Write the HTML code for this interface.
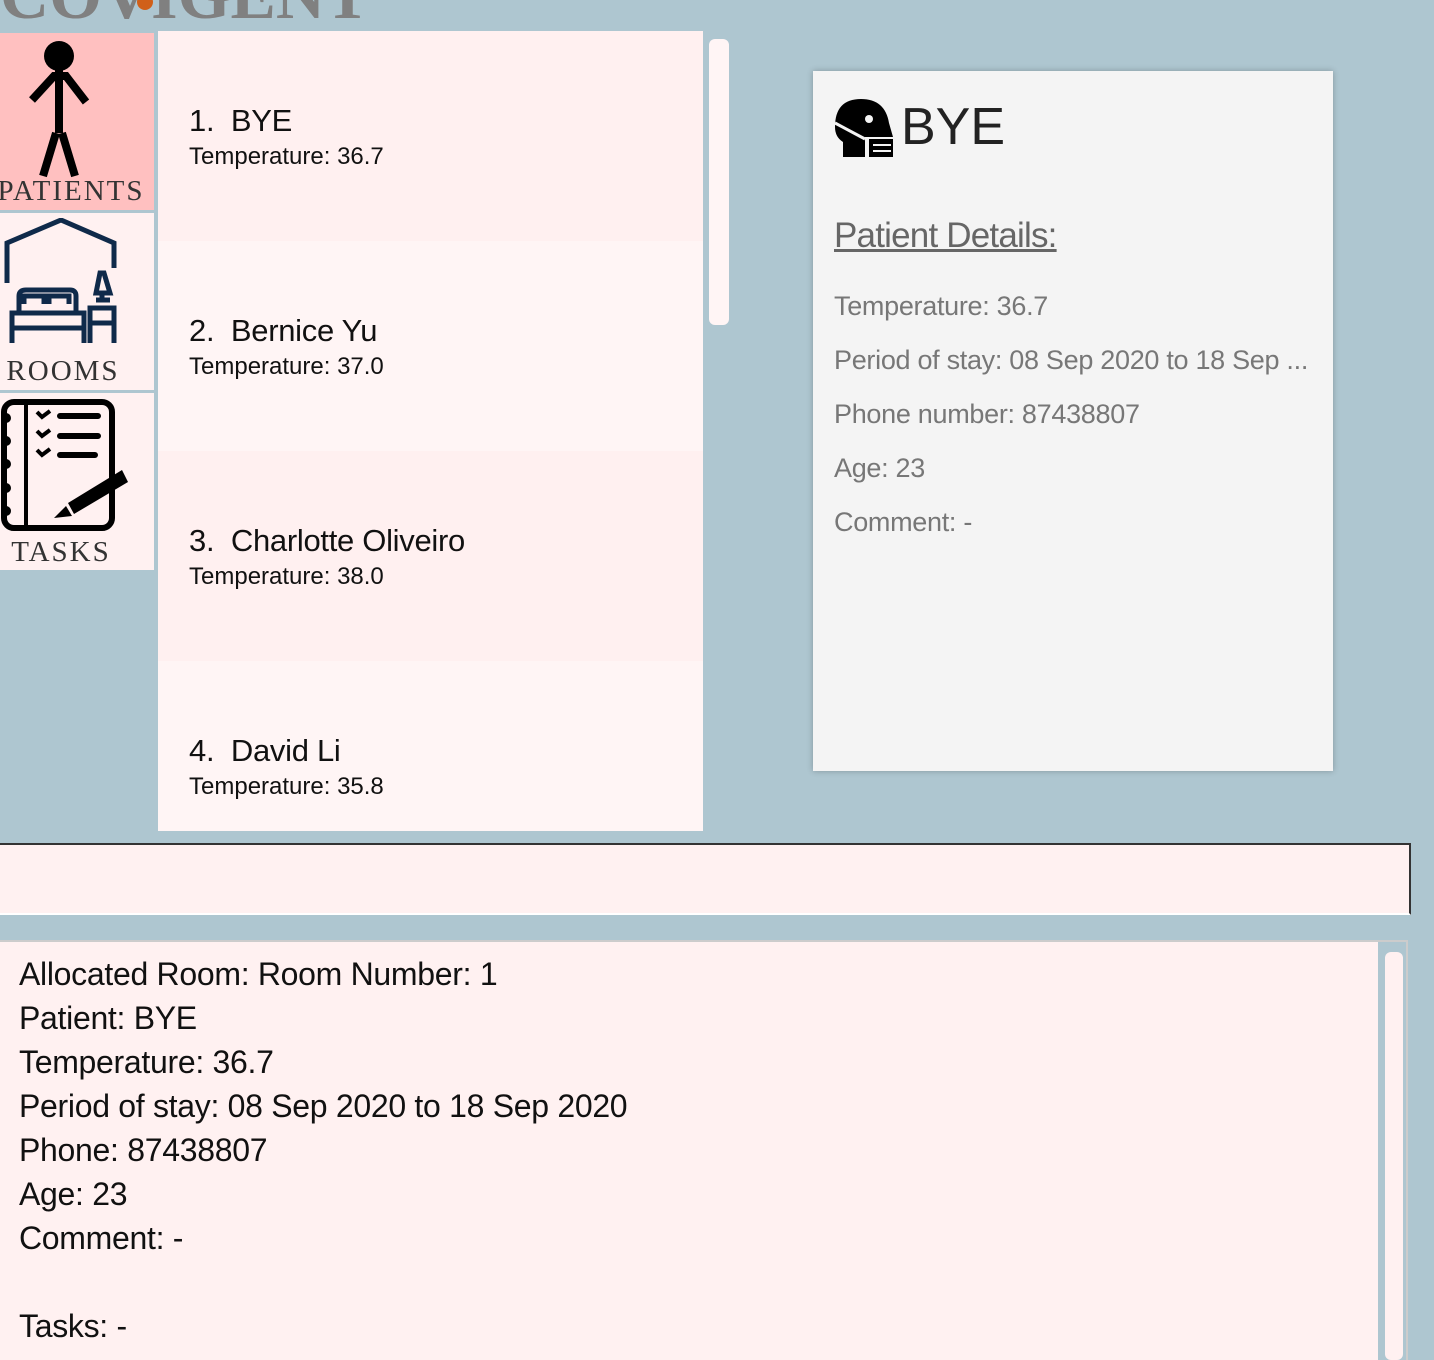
<!DOCTYPE html>
<html><head><style>
html,body{margin:0;height:1360px;overflow:hidden}
body{width:1434px;background:#aec6d0;position:relative;font-family:"Liberation Sans",sans-serif}
.abs{position:absolute}
.nav{left:0;width:154px;background:#fff1f1}
.navl{position:absolute;left:0;width:154px;text-align:center;font-family:"Liberation Serif",serif;font-size:29px;color:#333;letter-spacing:1px}
.row{left:158px;width:545px;height:210px}
.n{position:absolute;left:31px;font-size:31px;color:#111;letter-spacing:-0.3px}
.t{position:absolute;left:31px;font-size:24px;color:#111}
.d{position:absolute;left:21px;font-size:27px;color:#777;letter-spacing:-0.3px}
.r{font-size:32px;color:#111;line-height:44px;letter-spacing:-0.3px}
</style></head><body>
<div class="abs" style="left:0;top:-44px;font-family:'Liberation Serif',serif;font-size:68px;font-weight:bold;color:#808080;letter-spacing:0px">COVIGENT</div>
<div class="abs" style="left:137px;top:-6px;width:16px;height:16px;border-radius:50%;background:#d0601a"></div>

<div class="abs nav" style="top:33px;height:177px;background:#ffc0c0"></div>
<svg class="abs" style="left:20px;top:38px" width="80" height="140" viewBox="0 0 80 140"><circle cx="39" cy="18" r="15" fill="#000"/><path d="M39 30 V95 M12 62 L34 38 H46 L66 64 M36 95 L23 138 M42 95 L55 138" stroke="#000" stroke-width="8" fill="none"/></svg>
<div class="navl" style="top:175px;left:-6px;letter-spacing:2px">PATIENTS</div>

<div class="abs nav" style="top:213px;height:177px"></div>
<svg class="abs" style="left:4px;top:218px" width="114" height="130" viewBox="0 0 114 130"><g stroke="#0f2a4a" stroke-width="5" fill="none"><path d="M3 65 V25 L57 2 L110 25 V50"/><path d="M8 125 V95 H80 V125 M8 110 H80 M15 95 V78 Q15 72 22 72 H66 Q72 72 72 78 V95 M20 86 V78 H40 V86 M45 86 V78 H65 V86"/><path d="M86 125 V90 H110 V125 M86 105 H110 M92 75 H106 L100 55 H96 Z M98 75 V82 M92 82 H106"/></g></svg>
<div class="navl" style="top:355px;left:-14px;letter-spacing:2px">ROOMS</div>

<div class="abs nav" style="top:393px;height:177px"></div>
<svg class="abs" style="left:0;top:398px" width="130" height="135" viewBox="0 0 130 135"><g fill="none" stroke="#000"><rect x="4" y="4" width="108" height="126" rx="10" stroke-width="6"/><path d="M26 6 V128" stroke-width="4"/><path d="M60 18 H98 M60 38 H98 M60 57 H95" stroke-width="6" stroke-linecap="round"/><path d="M37 14 l5 5 l8 -6 M37 33 l5 5 l8 -6 M37 52 l5 5 l8 -6" stroke-width="4"/></g><g fill="#000"><circle cx="6" cy="20" r="5"/><circle cx="6" cy="43" r="5"/><circle cx="6" cy="66" r="5"/><circle cx="6" cy="90" r="5"/><circle cx="6" cy="113" r="5"/><path d="M68 105 L122 72 L128 84 L74 116 Z M66 108 L72 118 L54 120 Z"/></g></svg>
<div class="navl" style="top:536px;left:-16px;letter-spacing:2px">TASKS</div>

<div class="abs row" style="top:31px;background:#fff0f0"><div class="n" style="top:72px">1.&nbsp; BYE</div><div class="t" style="top:112px">Temperature: 36.7</div></div>
<div class="abs row" style="top:241px;background:#fff5f5"><div class="n" style="top:72px">2.&nbsp; Bernice Yu</div><div class="t" style="top:112px">Temperature: 37.0</div></div>
<div class="abs row" style="top:451px;background:#fff0f0"><div class="n" style="top:72px">3.&nbsp; Charlotte Oliveiro</div><div class="t" style="top:112px">Temperature: 38.0</div></div>
<div class="abs row" style="top:661px;height:170px;background:#fff5f5"><div class="n" style="top:72px">4.&nbsp; David Li</div><div class="t" style="top:112px">Temperature: 35.8</div></div>
<div class="abs" style="left:709px;top:39px;width:20px;height:286px;border-radius:6px;background:#fff5f5"></div>

<div class="abs" style="left:813px;top:71px;width:520px;height:700px;background:#f4f4f4;box-shadow:0 0 6px rgba(0,0,0,.25)">
<svg class="abs" style="left:20px;top:26px" width="60" height="60" viewBox="0 0 60 60"><path d="M2 30 Q2 2 28 2 Q52 2 56 26 L60 40 H32 V60 H10 V45 Q2 40 2 30 Z" fill="#000"/><circle cx="36" cy="22" r="4" fill="#f4f4f4"/><path d="M2 26 L32 42" stroke="#f4f4f4" stroke-width="3"/><path d="M36 42 H60 V60 H36 Z" fill="#000"/><path d="M40 48 H58 M40 54 H58" stroke="#f4f4f4" stroke-width="2"/></svg>
<div class="abs" style="left:88px;top:26px;font-size:52px;color:#222">BYE</div>
<div class="abs" style="left:21px;top:145px;font-size:35px;color:#666;text-decoration:underline;letter-spacing:-0.8px">Patient Details:</div>
<div class="d" style="top:220px">Temperature: 36.7</div>
<div class="d" style="top:274px;white-space:nowrap">Period of stay: 08 Sep 2020 to 18 Sep ...</div>
<div class="d" style="top:328px">Phone number: 87438807</div>
<div class="d" style="top:382px">Age: 23</div>
<div class="d" style="top:436px">Comment: -</div>
</div>

<div class="abs" style="left:0;top:843px;width:1409px;height:68px;background:#fff1f1;border-top:2px solid #333;border-right:2px solid #333;border-bottom:2px solid #fff"></div>

<div class="abs" style="left:0;top:940px;width:1408px;height:420px;background:#fff1f1;border-top:2px solid #ccc"></div>
<div class="abs" style="left:1378px;top:942px;width:28px;height:418px;background:#aec6d0;border-right:2px solid #ccc"></div>
<div class="abs" style="left:1385px;top:952px;width:18px;height:408px;border-radius:6px;background:#fff1f1"></div>
<div class="abs" style="left:19px;top:952px">
<div class="r">Allocated Room: Room Number: 1</div><div class="r">Patient: BYE</div><div class="r">Temperature: 36.7</div><div class="r">Period of stay: 08 Sep 2020 to 18 Sep 2020</div><div class="r">Phone: 87438807</div><div class="r">Age: 23</div><div class="r">Comment: -</div><div class="r">&nbsp;</div><div class="r">Tasks: -</div>
</div>
</body></html>
